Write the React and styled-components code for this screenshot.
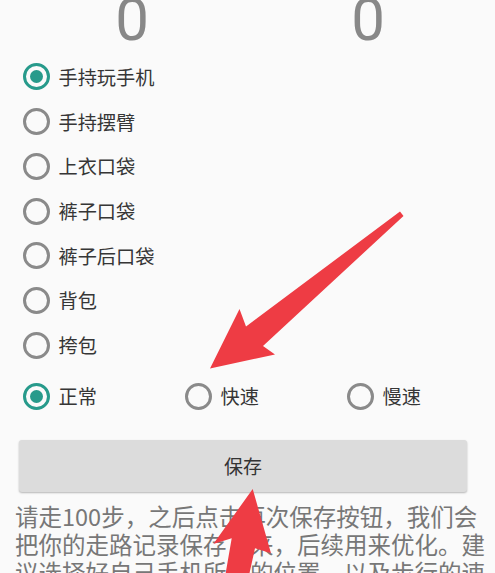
import React, { useState } from "react";
import styled, { createGlobalStyle } from "styled-components";

const GlobalStyle = createGlobalStyle`
  html, body {
    margin: 0;
    padding: 0;
    background: #fafafa;
  }
  body {
    font-family: "Noto Sans CJK SC", "Noto Sans", sans-serif;
    overflow: hidden;
  }
`;

const Page = styled.div`
  position: relative;
  width: 495px;
  height: 573px;
  overflow: hidden;
  background: #fafafa;
`;

const Counters = styled.div`
  display: grid;
  grid-template-columns: 236px 236px;
  margin: -10px 0 0 14px;
`;

const Count = styled.div`
  font-family: Roboto, "Liberation Sans", sans-serif;
  font-size: 60px;
  line-height: 60px;
  color: #888;
  text-align: center;
`;

const List = styled.div`
  display: flex;
  flex-direction: column;
  margin-top: 4.6px;
`;

const Row = styled.label`
  display: flex;
  align-items: center;
  gap: 9px;
  height: 44.7px;
  padding-left: 22.5px;
  cursor: pointer;
`;

const Circle = styled.span`
  box-sizing: border-box;
  width: 27px;
  height: 27px;
  flex: none;
  border-radius: 50%;
  border: 3px solid ${(p) => (p.$on ? "#279a8b" : "#8a8a8a")};
  display: flex;
  align-items: center;
  justify-content: center;

  &::after {
    content: "";
    width: 13px;
    height: 13px;
    border-radius: 50%;
    background: #279a8b;
    display: ${(p) => (p.$on ? "block" : "none")};
  }
`;

const Label = styled.span`
  font-size: 19.2px;
  color: #363636;
`;

const SpeedRow = styled.div`
  display: grid;
  grid-template-columns: 162px 162px 162px;
  margin-top: 6.3px;
`;

const SaveButton = styled.button`
  display: block;
  width: 448px;
  height: 52px;
  margin: 21.6px 0 0 19px;
  border: none;
  border-radius: 3px;
  background: #dcdcdc;
  box-shadow: 0 1px 2px rgba(0, 0, 0, 0.28);
  font-family: "Noto Sans CJK SC", sans-serif;
  font-size: 19px;
  color: #333;
`;

const Hint = styled.p`
  margin: 10px 0 0;
  padding: 0 9px 0 15px;
  font-size: 23.5px;
  line-height: 28px;
  color: #777;
`;

const Overlay = styled.svg`
  position: absolute;
  left: 0;
  top: 0;
  width: 495px;
  height: 573px;
  pointer-events: none;
`;

const places = ["手持玩手机", "手持摆臂", "上衣口袋", "裤子口袋", "裤子后口袋", "背包", "挎包"];
const speeds = ["正常", "快速", "慢速"];

export default function App() {
  const [place, setPlace] = useState(0);
  const [speed, setSpeed] = useState(0);

  return (
    <Page>
      <GlobalStyle />
      <Counters>
        <Count>0</Count>
        <Count>0</Count>
      </Counters>
      <List>
        {places.map((p, i) => (
          <Row key={p} onClick={() => setPlace(i)}>
            <Circle $on={place === i} />
            <Label>{p}</Label>
          </Row>
        ))}
      </List>
      <SpeedRow>
        {speeds.map((s, i) => (
          <Row key={s} onClick={() => setSpeed(i)}>
            <Circle $on={speed === i} />
            <Label>{s}</Label>
          </Row>
        ))}
      </SpeedRow>
      <SaveButton>保存</SaveButton>
      <Hint>
        请走100步，之后点击再次保存按钮，我们会把你的走路记录保存下来，后续用来优化。建议选择好自己手机所在的位置，以及步行的速度。
      </Hint>
      {/* red annotation arrows drawn over the screen */}
      <Overlay viewBox="0 0 495 573">
        <polygon
          fill="#ee3c44"
          points="210,368.5 239.5,309 246,326.5 400,211.5 403.5,216 263,346 275,354.5"
        />
        <polygon
          fill="#ee3c44"
          points="252.7,489 213.3,544 231.7,538.3 224.5,580 248,580 255,548.3 271,553.3"
        />
      </Overlay>
    </Page>
  );
}
